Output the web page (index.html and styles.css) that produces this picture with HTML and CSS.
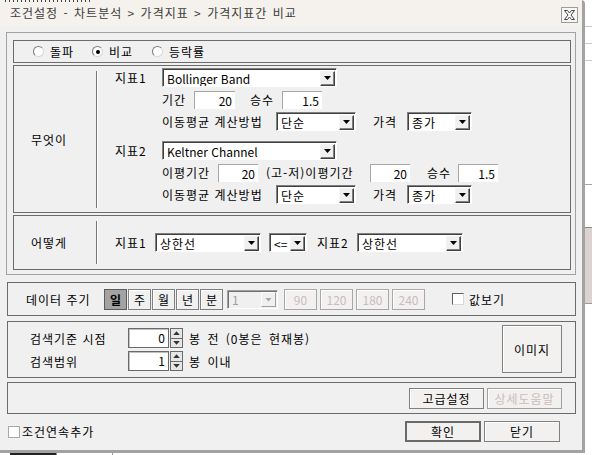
FILE: index.html
```html
<!DOCTYPE html>
<html lang="ko">
<head>
<meta charset="utf-8">
<title>조건설정</title>
<link rel="stylesheet" href="styles.css">
</head>
<body>
<div class="screen">
  <div class="window">
    <div class="titlebar">
      <div class="topmarks"></div>
      <div class="titlerow">
        <span class="title">조건설정 - 차트분석 &gt; 가격지표 &gt; 가격지표간 비교</span>
        <div class="close">
          <svg width="13" height="12" viewBox="0 0 13 12"><path d="M1.5 1.5H4.5L6.5 4L8.5 1.5H11.5L8 6L11.5 10.5H8.5L6.5 8L4.5 10.5H1.5L5 6Z" fill="#fff" stroke="#444" stroke-width="1"/></svg>
        </div>
      </div>
    </div>
    <div class="client">
      <div class="panel-top">
        <div class="group radios">
          <div class="radio"><span class="rc"></span><span>돌파</span></div>
          <div class="radio"><span class="rc on"></span><span>비교</span></div>
          <div class="radio"><span class="rc"></span><span>등락률</span></div>
        </div>
        <div class="group what">
          <div class="side-label">무엇이</div>
          <div class="vsep"></div>
          <div class="what-body">
            <div class="row">
              <span class="lbl w47">지표1</span>
              <div class="select w175"><span class="val latin">Bollinger Band</span><span class="dd"></span></div>
            </div>
            <div class="row indent">
              <span class="lbl w32">기간</span>
              <div class="input w41">20</div>
              <span class="lbl w32 ml15">승수</span>
              <div class="input w40">1.5</div>
            </div>
            <div class="row indent">
              <span class="lbl w114">이동평균 계산방법</span>
              <div class="select w80"><span class="val">단순</span><span class="dd"></span></div>
              <span class="lbl w34 ml17">가격</span>
              <div class="select w65"><span class="val">종가</span><span class="dd"></span></div>
            </div>
            <div class="row sec">
              <span class="lbl w47">지표2</span>
              <div class="select w175"><span class="val latin">Keltner Channel</span><span class="dd"></span></div>
            </div>
            <div class="row indent">
              <span class="lbl w56">이평기간</span>
              <div class="input w40">20</div>
              <span class="lbl w104 ml8">(고-저)이평기간</span>
              <div class="input w40">20</div>
              <span class="lbl w31 ml17">승수</span>
              <div class="input w40">1.5</div>
            </div>
            <div class="row indent">
              <span class="lbl w114">이동평균 계산방법</span>
              <div class="select w80"><span class="val">단순</span><span class="dd"></span></div>
              <span class="lbl w34 ml17">가격</span>
              <div class="select w65"><span class="val">종가</span><span class="dd"></span></div>
            </div>
          </div>
        </div>
        <div class="group how">
          <div class="side-label">어떻게</div>
          <div class="vsep"></div>
          <div class="how-body">
            <span class="lbl w40">지표1</span>
            <div class="select w106"><span class="val">상한선</span><span class="dd"></span></div>
            <div class="select w38 ml8"><span class="val latin">&lt;=</span><span class="dd"></span></div>
            <span class="lbl w40 ml10">지표2</span>
            <div class="select w106"><span class="val">상한선</span><span class="dd"></span></div>
          </div>
        </div>
      </div>

      <div class="group period">
        <span class="lbl w78">데이터 주기</span>
        <div class="pb on">일</div>
        <div class="pb">주</div>
        <div class="pb">월</div>
        <div class="pb">년</div>
        <div class="pb">분</div>
        <div class="select dis w51"><span class="val latin">1</span><span class="dd"></span></div>
        <div class="db first">90</div>
        <div class="db">120</div>
        <div class="db">180</div>
        <div class="db">240</div>
        <span class="cb sunk"></span>
        <span class="cb-text">값보기</span>
      </div>

      <div class="group search">
        <div class="search-rows">
          <div class="srow">
            <span class="lbl w98">검색기준 시점</span>
            <div class="sinput">0</div>
            <div class="spin"><span class="up"></span><span class="down"></span></div>
            <span class="after">봉 전 (0봉은 현재봉)</span>
          </div>
          <div class="srow">
            <span class="lbl w98">검색범위</span>
            <div class="sinput">1</div>
            <div class="spin"><span class="up"></span><span class="down"></span></div>
            <span class="after">봉 이내</span>
          </div>
        </div>
        <div class="btn imgbtn">이미지</div>
      </div>

      <div class="group btnrow">
        <div class="btn w75">고급설정</div>
        <div class="btn w75 disabled">상세도움말</div>
      </div>

      <div class="footer">
        <span class="cb flat"></span>
        <span class="cb-text2">조건연속추가</span>
        <div class="btn w76 default">확인</div>
        <div class="btn w76">닫기</div>
      </div>
    </div>
  </div>
  <div class="side"></div>
</div>
<div class="bottom-strip"></div>
</body>
</html>
```

FILE: styles.css
```css
* { box-sizing: border-box; }
html, body { margin: 0; padding: 0; }
body {
  width: 592px;
  height: 455px;
  overflow: hidden;
  background: #fff;
  font-family: "Noto Sans CJK KR", "Noto Sans", sans-serif;
  font-size: 12px;
  letter-spacing: 1px;
  color: #000;
}
.latin { letter-spacing: 0; }
.screen { display: flex; height: 453px; }
.window {
  width: 585px;
  height: 453px;
  flex: none;
  background: #f0f0f0;
  border-right: 3px solid #a3a3a3;
  border-bottom: 3px solid #a3a3a3;
  border-top-right-radius: 4px;
  display: flex;
  flex-direction: column;
}
.titlebar {
  height: 26px;
  flex: none;
  background: #f5f2ed;
  display: flex;
  flex-direction: column;
}
.topmarks {
  height: 2px;
  width: 88px;
  margin-left: 5px;
  background: repeating-linear-gradient(90deg, #444 0 1px, transparent 1px 4px);
}
.titlerow {
  flex: 1;
  display: flex;
  align-items: flex-start;
  padding-left: 10px;
}
.title {
  line-height: 22px;
  color: #3c3c3c;
  word-spacing: 1px;
  white-space: nowrap;
}
.close {
  margin-left: auto;
  margin-top: 5px;
  margin-right: 4px;
  width: 17px;
  height: 16px;
  border: 1px solid #9c9c9c;
  background: #f8f7f5;
  display: flex;
  align-items: center;
  justify-content: center;
}
.client {
  flex: 1;
  padding: 6px 7px 0 6px;
  display: flex;
  flex-direction: column;
}
.panel-top {
  width: 570px;
  height: 243px;
  flex: none;
  border: 1px solid #a2a2a2;
  padding: 7px 4px 0 6px;
}
.group { border: 1px solid #6b6b6b; flex: none; }

/* radios */
.radios {
  height: 23px;
  display: flex;
  align-items: center;
  padding-left: 19px;
}
.radio { display: flex; align-items: center; width: 59px; }
.radio + .radio { width: 60px; }
.rc {
  width: 11px;
  height: 11px;
  border-radius: 50%;
  background: #fff;
  border: 1px solid;
  border-color: #7a7a7a #d8d8d8 #d8d8d8 #7a7a7a;
  margin-right: 6px;
  display: flex;
  align-items: center;
  justify-content: center;
}
.rc.on::after {
  content: "";
  width: 4px;
  height: 4px;
  border-radius: 50%;
  background: #000;
}

/* 무엇이 / 어떻게 */
.what { height: 148px; margin-top: 2px; display: flex; }
.how { height: 55px; margin-top: 2px; display: flex; }
.side-label {
  width: 82px;
  padding-right: 12px;
  text-align: center;
  align-self: center;
}
.vsep {
  width: 1px;
  background: #777;
  margin: 5px 0 4px;
  box-shadow: 1px 0 0 #fff;
}
.how .vsep { margin: 5px 0 5px; }
.what-body {
  padding-left: 18px;
  padding-top: 2px;
  display: flex;
  flex-direction: column;
}
.how-body {
  padding-left: 18px;
  display: flex;
  align-items: center;
}
.row { display: flex; align-items: center; height: 19px; }
.row + .row { margin-top: 3px; }
.row.sec { margin-top: 10px; }
.indent { padding-left: 47px; }

.lbl { flex: none; white-space: nowrap; }
.w31 { width: 31px; }
.w32 { width: 32px; }
.w34 { width: 34px; }
.w38 { width: 38px; }
.w40 { width: 40px; }
.w41 { width: 41px; }
.w47 { width: 47px; }
.w51 { width: 51px; }
.w56 { width: 56px; }
.w65 { width: 65px; }
.w75 { width: 75px; }
.w76 { width: 76px; }
.w78 { width: 78px; }
.w80 { width: 80px; }
.w98 { width: 98px; }
.w104 { width: 104px; }
.w106 { width: 106px; }
.w114 { width: 114px; }
.w175 { width: 175px; }
.ml8 { margin-left: 8px; }
.ml10 { margin-left: 10px; }
.ml15 { margin-left: 15px; }
.ml17 { margin-left: 17px; }

/* select */
.select {
  flex: none;
  height: 19px;
  background: #fff;
  border: 1px solid;
  border-color: #808080 #fff #fff #808080;
  box-shadow: inset 1px 1px 0 #404040;
  display: flex;
  align-items: center;
  padding: 1px 1px 0 4px;
}
.val { flex: 1; white-space: nowrap; overflow: hidden; line-height: 15px; }
.dd {
  flex: none;
  width: 15px;
  height: 15px;
  background: #f0f0f0;
  border: 1px solid;
  border-color: #f4f4f4 #404040 #404040 #f4f4f4;
  box-shadow: inset -1px -1px 0 #808080;
  display: flex;
  align-items: center;
  justify-content: center;
}
.dd::after {
  content: "";
  width: 7px;
  height: 4px;
  background: #000;
  clip-path: polygon(0 0, 100% 0, 50% 100%);
}
.select.dis {
  background: #f0f0f0;
  margin-left: 3px;
  color: #a0a0a0;
  border-color: #a0a0a0 #fff #fff #a0a0a0;
  box-shadow: inset 1px 1px 0 #707070;
}
.select.dis .dd {
  border-color: #fff #a0a0a0 #a0a0a0 #fff;
  box-shadow: none;
}
.select.dis .dd::after { background: #a8a8a8; }

/* text input */
.input {
  flex: none;
  height: 18px;
  background: #fff;
  border-top: 1px solid #a8a8a8;
  border-left: 1px solid #a8a8a8;
  text-align: right;
  padding-right: 3px;
  line-height: 17px;
  letter-spacing: 0;
}

/* period */
.period {
  width: 569px;
  height: 34px;
  margin-top: 7px;
  margin-left: 1px;
  display: flex;
  align-items: center;
  padding-left: 18px;
}
.pb {
  flex: none;
  width: 23px;
  height: 21px;
  margin-right: 1px;
  border: 1px solid #808080;
  background: #f0f0f0;
  box-shadow: inset 1px 1px 0 #fff;
  display: flex;
  align-items: center;
  justify-content: center;
  letter-spacing: 0;
}
.pb.on {
  background: #a3a3a3;
  border-color: #5c5c5c;
  box-shadow: none;
  font-weight: bold;
}
.db {
  flex: none;
  width: 33px;
  height: 21px;
  margin-left: 3px;
  border: 1px solid #a8a8a8;
  background: #f3f0f0;
  box-shadow: inset 1px 1px 0 #fff;
  color: #cbbcbc;
  display: flex;
  align-items: center;
  justify-content: center;
  letter-spacing: 0;
}
.db.first { margin-left: 6px; }
.cb {
  flex: none;
  width: 12px;
  height: 12px;
  background: #fff;
}
.cb.sunk {
  margin-left: 27px;
  border: 1px solid;
  border-color: #606060 #d8d8d8 #d8d8d8 #606060;
}
.cb.flat {
  margin-left: 2px;
  border: 1px solid #a8a8a8;
}
.cb-text { margin-left: 5px; }
.cb-text2 { margin-left: 2px; }

/* search */
.search {
  width: 569px;
  height: 57px;
  margin-top: 5px;
  margin-left: 1px;
  display: flex;
}
.search-rows { padding-left: 22px; padding-top: 6px; }
.srow { display: flex; align-items: center; height: 20px; }
.srow + .srow { margin-top: 3px; }
.sinput {
  flex: none;
  width: 41px;
  height: 20px;
  background: #fff;
  border: 1px solid #6a6a6a;
  box-shadow: inset 1px 1px 0 #c0c0c0;
  text-align: right;
  padding-right: 3px;
  line-height: 18px;
  letter-spacing: 0;
}
.spin {
  flex: none;
  width: 13px;
  height: 20px;
  margin-left: 1px;
  display: flex;
  flex-direction: column;
}
.spin span {
  flex: 1;
  background: #e6e6e6;
  border: 1px solid #6a6a6a;
  display: flex;
  align-items: center;
  justify-content: center;
}
.spin span + span { border-top: none; }
.spin span::after {
  content: "";
  width: 7px;
  height: 4px;
  background: #333;
}
.spin .up::after { clip-path: polygon(50% 0, 100% 100%, 0 100%); }
.spin .down::after { clip-path: polygon(0 0, 100% 0, 50% 100%); }
.after { margin-left: 6px; white-space: nowrap; word-spacing: 2px; }

/* buttons */
.btn {
  flex: none;
  height: 21px;
  border: 1px solid #808080;
  background: #f3f0f0;
  box-shadow: inset 1px 1px 0 #fff;
  display: flex;
  align-items: center;
  justify-content: center;
  white-space: nowrap;
}
.btn.disabled { color: #cbbcbc; border-color: #a0a0a0; }
.btn.default { border: 2px solid #6a6a6a; box-shadow: none; }
.imgbtn {
  width: 60px;
  height: 48px;
  margin-left: auto;
  margin-right: 13px;
  margin-top: 3px;
}
.btnrow {
  width: 569px;
  height: 32px;
  margin-top: 4px;
  margin-left: 1px;
  display: flex;
  align-items: center;
  justify-content: flex-end;
  padding-right: 13px;
  gap: 3px;
}
.footer {
  height: 35px;
  display: flex;
  align-items: center;
}
.footer .default { margin-left: auto; }
.footer .btn + .btn { margin-left: 3px; margin-right: 15px; }

/* background outside window */
.side {
  flex: 1;
  background:
    linear-gradient(to bottom,
      transparent 0 26px, #c8c8c8 26px 27px,
      transparent 27px 43px, #c8c8c8 43px 44px,
      transparent 44px 60px, #c8c8c8 60px 61px,
      transparent 61px 184px, #a8a8a8 184px 185px,
      transparent 185px 227px, #8a8a8a 227px 228px,
      #ddd2d2 228px 303px, #9a9a9a 303px 304px,
      transparent 304px);
}
.bottom-strip {
  height: 2px;
  background:
    linear-gradient(90deg, transparent 0 10px, #222 10px 56px, #888 56px 57px, transparent 57px 112px, #999 112px 113px, transparent 113px),
    #fff;
}
```
